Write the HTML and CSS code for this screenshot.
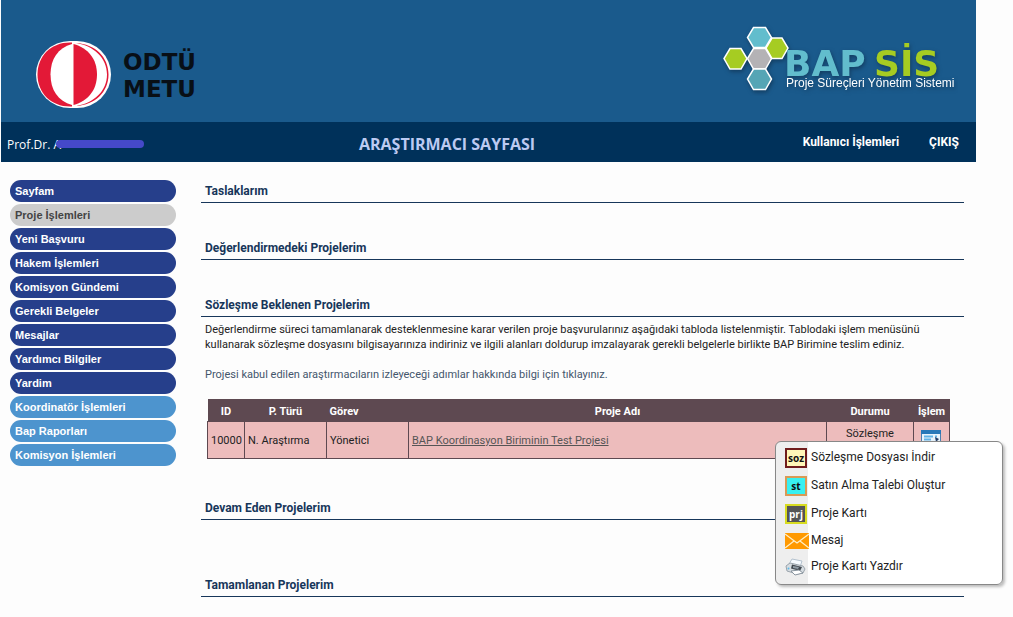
FILE: index.html
```
<!DOCTYPE html>
<html lang="tr">
<head>
<meta charset="utf-8">
<title>BAPSİS - Araştırmacı Sayfası</title>
<link rel="stylesheet" href="styles.css">
</head>
<body>
<div class="page">
  <header class="banner">
    <svg class="logo-metu" width="170" height="76" viewBox="0 0 170 76" role="img" aria-label="ODTÜ METU">
      <rect x="1" y="5" width="75" height="67" rx="34" ry="33.500" fill="#fff"/>
      <path d="M37 6.500H35C16 6.500 2.500 20 2.500 38.500S16 70.500 35 70.500H37Z" fill="#e31937"/>
      <path d="M37 8C23 12 15.500 23 15.500 38.500S23 65 37 69Z" fill="#fff"/>
      <path d="M38.500 8C53 12 62 23 62 38.500S53 65 38.500 69Z" fill="#e31937"/>
      <path d="M41 7C60 8 73.500 21 73.500 38.500S60 69 41 70C59 67 72 55 72 38.500S59 10 41 7Z" fill="#e31937"/>
      <text class="metu-text" x="88" y="34">ODTÜ</text>
      <text class="metu-text" x="88" y="61">METU</text>
    </svg>
    <svg class="logo-bapsis" width="236" height="72" viewBox="0 0 236 72" role="img" aria-label="BAPSİS Proje Süreçleri Yönetim Sistemi">
      <g class="logo-shadow">
        <g stroke="#fff" stroke-width="1.500">
          <path d="M31.500 3.500H43.500L49.500 13.500L43.500 23.500H31.500L25.500 13.500Z" fill="#62bdcd"/>
          <path d="M50 14H60L66 24L60 34.500H50L44 24Z" fill="#a6cc22"/>
          <path d="M8 24.500H19L25 34.500L19 45H8L2 34.500Z" fill="#a6cc22"/>
          <path d="M31.500 24.500H43.500L49.500 34.500L43.500 45H31.500L25.500 34.500Z" fill="#b4b2b5"/>
          <path d="M31.500 45H43.500L49.500 55L43.500 65.500H31.500L25.500 55Z" fill="#55a5b5"/>
        </g>
        <text class="bap-text" x="62" y="52">BAP</text>
        <text class="sis-text" x="152" y="52">SİS</text>
        <text class="slogan" x="64" y="63">Proje Süreçleri Yönetim Sistemi</text>
      </g>
    </svg>
  </header>
  <div class="userbar">
    <div class="user">Prof.Dr. A<span class="redaction"></span></div>
    <h1 class="page-title">ARAŞTIRMACI SAYFASI</h1>
    <nav class="user-links">
      <a href="#">Kullanıcı İşlemleri</a>
      <a href="#">ÇIKIŞ</a>
    </nav>
  </div>
  <div class="columns">
    <nav class="sidebar">
      <a class="pill" href="#">Sayfam</a>
      <a class="pill current" href="#">Proje İşlemleri</a>
      <a class="pill" href="#">Yeni Başvuru</a>
      <a class="pill" href="#">Hakem İşlemleri</a>
      <a class="pill" href="#">Komisyon Gündemi</a>
      <a class="pill" href="#">Gerekli Belgeler</a>
      <a class="pill" href="#">Mesajlar</a>
      <a class="pill" href="#">Yardımcı Bilgiler</a>
      <a class="pill" href="#">Yardim</a>
      <a class="pill light" href="#">Koordinatör İşlemleri</a>
      <a class="pill light" href="#">Bap Raporları</a>
      <a class="pill light" href="#">Komisyon İşlemleri</a>
    </nav>
    <main class="content">
      <section class="block"><h2>Taslaklarım</h2></section>
      <section class="block"><h2>Değerlendirmedeki Projelerim</h2></section>
      <section class="block">
        <h2>Sözleşme Beklenen Projelerim</h2>
        <p class="intro">Değerlendirme süreci tamamlanarak desteklenmesine karar verilen proje başvurularınız aşağıdaki tabloda listelenmiştir. Tablodaki işlem menüsünü<br>kullanarak sözleşme dosyasını bilgisayarınıza indiriniz ve ilgili alanları doldurup imzalayarak gerekli belgelerle birlikte BAP Birimine teslim ediniz.</p>
        <a class="help-link" href="#">Projesi kabul edilen araştırmacıların izleyeceği adımlar hakkında bilgi için tıklayınız.</a>
        <table class="projects">
          <colgroup><col class="c-id"><col class="c-type"><col class="c-role"><col><col class="c-status"><col class="c-action"></colgroup>
          <thead>
            <tr><th>ID</th><th>P. Türü</th><th class="left">Görev</th><th>Proje Adı</th><th>Durumu</th><th>İşlem</th></tr>
          </thead>
          <tbody>
            <tr>
              <td>10000</td><td>N. Araştırma</td><td>Yönetici</td>
              <td><a href="#">BAP Koordinasyon Biriminin Test Projesi</a></td>
              <td class="status">Sözleşme</td>
              <td class="action">
                <button class="menu-button" type="button" aria-label="İşlem menüsü">
                  <svg width="20" height="20" viewBox="0 0 20 20"><rect x=".5" y=".5" width="19" height="18" fill="#e8f3fb" stroke="#4b7fae"/><rect width="20" height="4" fill="#2878b8"/><path d="M3 6.500H12M3 9.500H10M3 13.500H10M14 6.500H16" stroke="#62b3e6" stroke-width="2"/><path d="M14 7L18 9L15 12Z" fill="#243e67"/></svg>
                </button>
                <div class="menu">
                  <a href="#"><span class="tag soz">soz</span>Sözleşme Dosyası İndir</a>
                  <a href="#"><span class="tag st">st</span>Satın Alma Talebi Oluştur</a>
                  <a href="#"><span class="tag prj">prj</span>Proje Kartı</a>
                  <a class="short wide-icon" href="#"><svg width="24" height="16" viewBox="0 0 24 16"><rect width="24" height="16" fill="#ff9900"/><path d="M0 1L12 10L24 1M0 15L9 8M24 15L15 8" fill="none" stroke="#fff0c8" stroke-width="1.200"/></svg>Mesaj</a>
                  <a class="short" href="#"><svg width="22" height="18" viewBox="0 0 22 18"><path d="M7 1L17 3L15 9L4 6Z" fill="#f5faff" stroke="#b4c2ce"/><path d="M1 8L5 5L18 8L20 11L18 15L12 16L2 13Z" fill="#d6dce1" stroke="#9aa4ac"/><path d="M7 6.500L17 9L15 13L6 10.500Z" fill="#424950"/><path d="M8 8L14 9L13 11L8 10Z" fill="#8e9ba5"/><path d="M6 13L14 12L18 15L10 17Z" fill="#fff" stroke="#8a959f"/><circle cx="3.500" cy="10.500" r="1" fill="#5cbbe8"/></svg>Proje Kartı Yazdır</a>
                </div>
              </td>
            </tr>
          </tbody>
        </table>
      </section>
      <section class="block long"><h2>Devam Eden Projelerim</h2></section>
      <section class="block"><h2>Tamamlanan Projelerim</h2></section>
    </main>
  </div>
</div>
</body>
</html>
```
FILE: styles.css
```
* { box-sizing: border-box; }
body {
  margin: 0;
  background: #fdfdfd;
  color: #222;
  font: 11px/15px Roboto, "Open Sans", sans-serif;
}
a { color: inherit; text-decoration: none; }
.page { margin: 0 37px 0 1px; }
.banner {
  display: flex;
  justify-content: space-between;
  align-items: flex-start;
  height: 122px;
  padding: 24px 18px 0 34px;
  background: #1a5a8c;
}
.logo-metu { margin-top: 12px; }
.metu-text { font: bold 23px "DejaVu Sans", sans-serif; fill: #080f16; }
.logo-shadow { filter: drop-shadow(1px 2px 2px #123c60); }
.bap-text, .sis-text { font: bold 36px "DejaVu Sans", sans-serif; fill: #62bdcd; }
.sis-text { fill: #a6cc22; }
.slogan { font: 12px "Liberation Sans", sans-serif; fill: #fff; }
.userbar {
  display: grid;
  grid-template-columns: 1fr auto 1fr;
  align-items: center;
  height: 40px;
  padding: 0 17px 0 6px;
  background: #00315a;
  color: #fff;
}
.user { display: flex; align-items: center; padding-top: 4px; font-family: "Open Sans", sans-serif; font-size: 12px; }
.redaction {
  width: 88px;
  height: 8px;
  margin-left: -5px;
  border-radius: 4px;
  background: #4549c8;
  z-index: 1;
}
.page-title {
  margin: 4px 72px 0 0;
  color: #bccaf2;
  font-family: "Open Sans", sans-serif;
  font-size: 16px;
  font-weight: bold;
  line-height: 20px;
}
.user-links { display: flex; justify-content: flex-end; gap: 30px; font-size: 12px; font-weight: bold; }
.columns { display: flex; gap: 25px; padding: 18px 12px 0 9px; }
.sidebar { display: flex; flex-direction: column; gap: 2px; flex: 0 0 166px; }
.pill {
  height: 22px;
  padding: 0 5px;
  border-radius: 11px;
  background: #263f8b;
  color: #fff;
  font: bold 11px/22px "Liberation Sans", Arial, sans-serif;
}
.pill.current { background: #ccc; color: #444; }
.pill.light { background: #4d94ce; }
.content { flex: 1; min-width: 0; }
.block { padding-bottom: 34px; }
.block.long { padding-bottom: 54px; }
h2 {
  margin: 0;
  padding: 2px 4px 1px;
  border-bottom: 1px solid #17365a;
  color: #17365a;
  font-size: 12px;
  font-weight: bold;
  line-height: 19px;
}
.intro { margin: 5px 4px 15px; white-space: nowrap; }
.help-link { display: block; margin: 0 4px 17px; color: #44566c; }
.projects {
  width: calc(100% - 20px);
  margin: 0 0 4px 6px;
  border-collapse: collapse;
  table-layout: fixed;
}
.c-id { width: 37px; }
.c-type, .c-role { width: 82px; }
.c-status { width: 87px; }
.c-action { width: 36px; }
th { height: 22px; padding: 3px 3px 0; background: #5e4951; color: #fff; }
th.left { text-align: left; }
td { height: 37px; padding: 2px 3px 0; border: 1px solid #5e4951; background: #edbcbc; white-space: nowrap; }
td a { color: #555; text-decoration: underline; }
.status { padding-top: 4px; text-align: center; vertical-align: top; }
.action { position: relative; padding: 8px 7px 0; vertical-align: top; }
.menu-button { display: block; height: 20px; padding: 0; border: 0; background: none; }
.menu {
  position: absolute;
  top: 19px;
  right: -54px;
  width: 228px;
  padding: 2px 9px 4px;
  border: 1px solid #888;
  border-radius: 6px;
  background: linear-gradient(90deg, #eee 32px, #fff 32px);
  box-shadow: 2px 2px 3px #bbb;
}
.menu a { display: flex; align-items: center; height: 28px; gap: 4px; color: #222; font-size: 12px; text-decoration: none; }
.menu a.short { height: 26px; }
.menu a.wide-icon { gap: 2px; }
.tag {
  width: 22px;
  height: 20px;
  border: 2px solid #701d1d;
  background: #fff7b8;
  color: #111;
  font-family: "Open Sans", sans-serif;
  font-size: 10px;
  font-weight: bold;
  line-height: 16px;
  text-align: center;
}
.tag.st { border-color: #d99a55; background: #38f0f0; }
.tag.prj { border-color: #d8dc20; background: #555; color: #fff; }
```
